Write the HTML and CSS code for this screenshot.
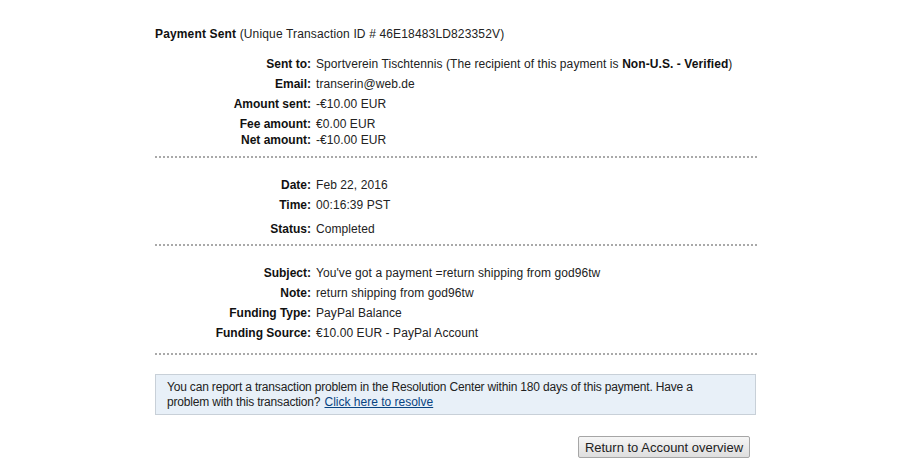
FILE: index.html
```html
<!DOCTYPE html>
<html lang="en">
<head>
<meta charset="utf-8">
<title>Payment Sent</title>
<link rel="stylesheet" href="styles.css">
</head>
<body>
<div class="page">
  <div class="title"><strong>Payment Sent</strong> (Unique Transaction ID # 46E18483LD823352V)</div>

  <div class="details first">
    <div class="label">Sent to:</div><div class="value">Sportverein Tischtennis (The recipient of this payment is <strong>Non-U.S. - Verified</strong>)</div>
    <div class="label">Email:</div><div class="value">transerin@web.de</div>
    <div class="label">Amount sent:</div><div class="value">-€10.00 EUR</div>
    <div class="label">Fee amount:</div><div class="value">€0.00 EUR</div>
    <div class="label compact">Net amount:</div><div class="value compact">-€10.00 EUR</div>
  </div>
  <div class="dots dots-1"></div>

  <div class="details">
    <div class="label">Date:</div><div class="value">Feb 22, 2016</div>
    <div class="label">Time:</div><div class="value">00:16:39 PST</div>
    <div class="label spaced">Status:</div><div class="value spaced">Completed</div>
  </div>
  <div class="dots dots-2"></div>

  <div class="details">
    <div class="label">Subject:</div><div class="value">You've got a payment =return shipping from god96tw</div>
    <div class="label">Note:</div><div class="value">return shipping from god96tw</div>
    <div class="label">Funding Type:</div><div class="value">PayPal Balance</div>
    <div class="label">Funding Source:</div><div class="value">€10.00 EUR - PayPal Account</div>
  </div>
  <div class="dots dots-3"></div>

  <div class="notice">
    <p class="notice-text">You can report a transaction problem in the Resolution Center within 180 days of this payment. Have a problem with this transaction? <a href="#">Click here to resolve</a></p>
  </div>

  <div class="actions">
    <button class="btn" type="button">Return to Account overview</button>
  </div>
</div>
</body>
</html>
```

FILE: styles.css
```css
html, body {
  margin: 0;
  padding: 0;
  background: #ffffff;
}

body {
  font-family: "Liberation Sans", Arial, sans-serif;
  font-size: 12px;
  line-height: 15px;
  color: #222222;
}

.page {
  width: 603px;
  margin-left: 155px;
  padding-top: 27px;
}

.title {
  color: #222222;
  letter-spacing: 0.15px;
}

.title strong {
  color: #111111;
}

.details {
  display: grid;
  grid-template-columns: 156px 1fr;
  column-gap: 5px;
  row-gap: 5px;
  margin-top: 20px;
}

.details.first {
  margin-top: 15px;
}

.label {
  text-align: right;
  font-weight: bold;
  color: #111111;
  white-space: nowrap;
}

.value {
  white-space: nowrap;
  letter-spacing: 0.08px;
}

.value strong {
  color: #111111;
}

.compact {
  margin-top: -4px;
}

.spaced {
  margin-top: 4px;
}

.dots {
  height: 2px;
  background-image: linear-gradient(to right, #a9a9a9 50%, transparent 50%);
  background-size: 4px 2px;
  background-repeat: repeat-x;
}

.dots-1 {
  margin-top: 8px;
}

.dots-2 {
  margin-top: 7px;
}

.dots-3 {
  margin-top: 12px;
}

.notice {
  margin-top: 19px;
  margin-right: 2px;
  padding: 5px 27px 4px 11px;
  background: #e8f0f8;
  border: 1px solid #c8d0d8;
  color: #222222;
}

.notice-text {
  margin: 0;
  letter-spacing: -0.18px;
  line-height: 15px;
}

.notice a {
  color: #084482;
  text-decoration: underline;
  letter-spacing: 0;
  margin-left: 1px;
}

.actions {
  display: flex;
  justify-content: flex-end;
  margin-top: 21px;
  padding-right: 8px;
}

.btn {
  width: 172px;
  height: 22px;
  padding: 0;
  font-family: "Liberation Sans", Arial, sans-serif;
  font-size: 13px;
  color: #222222;
  background: linear-gradient(#f6f6f6, #dedede);
  border: 1px solid #a6a6a6;
  border-radius: 2px;
}
```
